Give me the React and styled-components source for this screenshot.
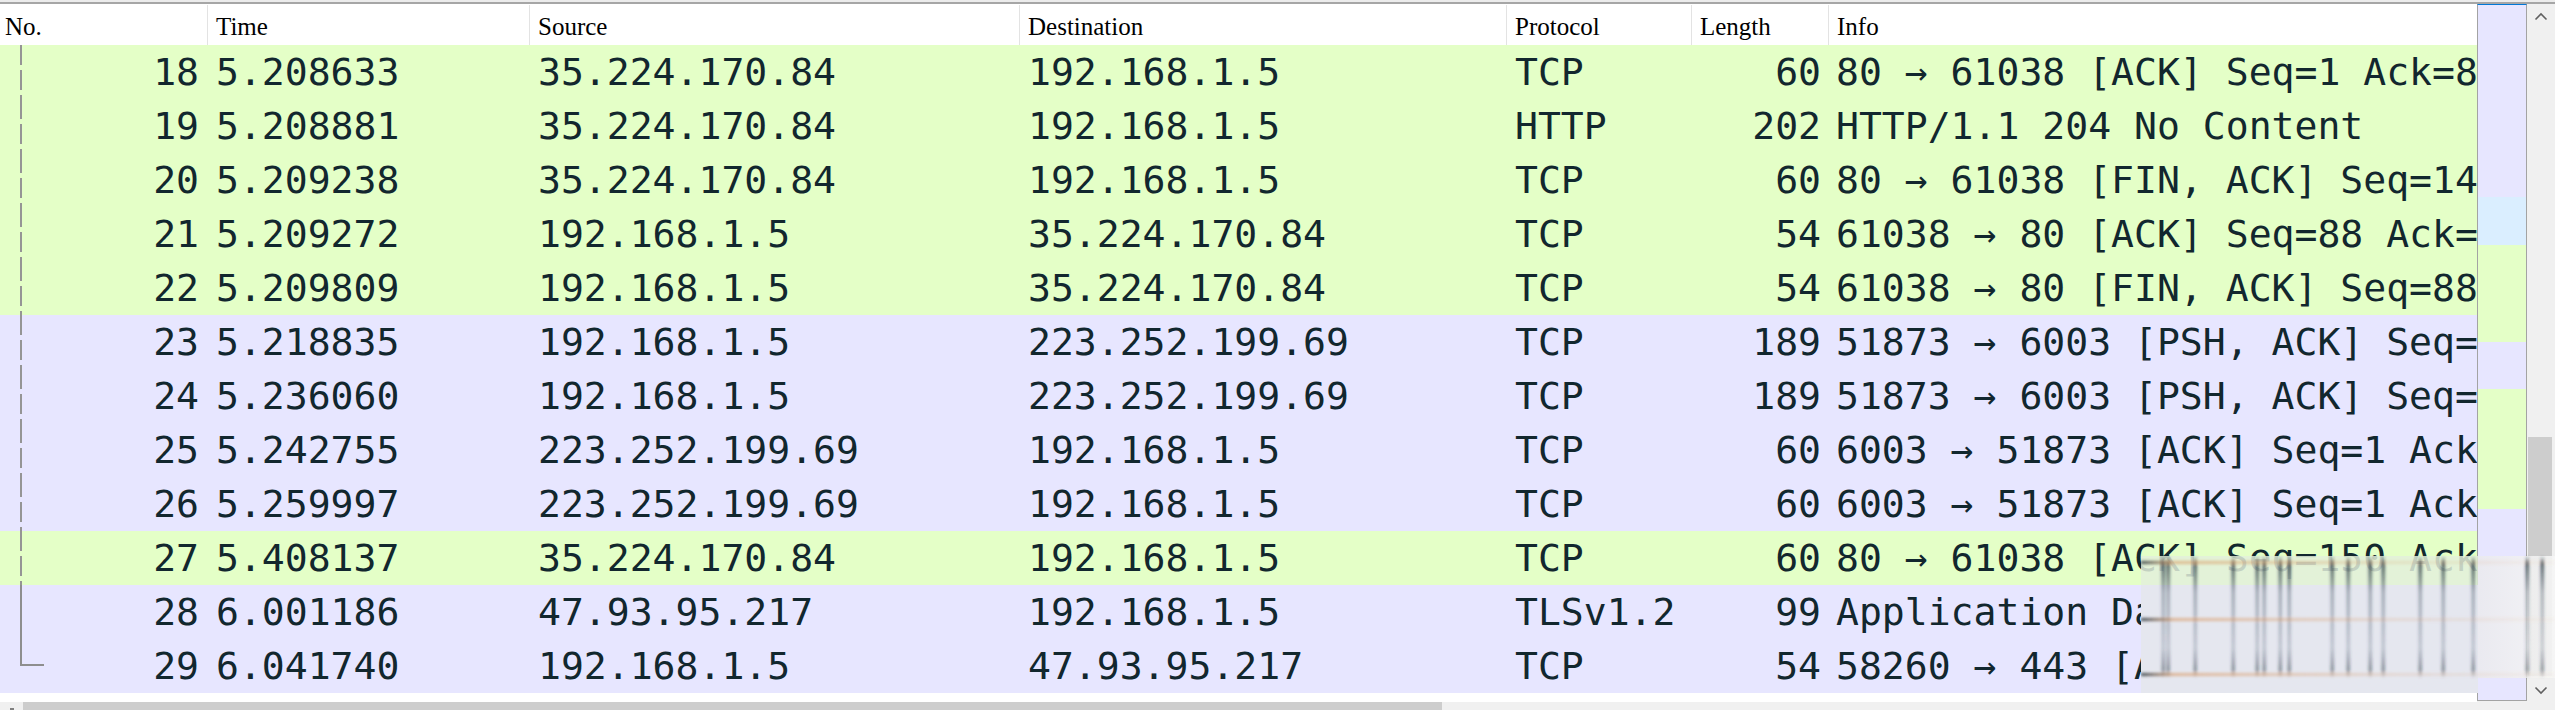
import React from 'react';
import styled, { createGlobalStyle } from 'styled-components';

const GlobalStyle = createGlobalStyle`
  html, body { margin: 0; padding: 0; background: #ffffff; }
  #root { width: 2555px; }
`;

const COLS = '207px 322px 490px 487px 185px 137px 1fr';

const GREEN = '#e4ffc7';
const LAVENDER = '#e7e6ff';
const BLUE = '#daeeff';

const packets = [
  { no: 18, time: '5.208633', src: '35.224.170.84', dst: '192.168.1.5', proto: 'TCP', len: 60, info: '80 → 61038 [ACK] Seq=1 Ack=88 Win=66816 Len=0', bg: GREEN, tree: 'dash' },
  { no: 19, time: '5.208881', src: '35.224.170.84', dst: '192.168.1.5', proto: 'HTTP', len: 202, info: 'HTTP/1.1 204 No Content', bg: GREEN, tree: 'dash' },
  { no: 20, time: '5.209238', src: '35.224.170.84', dst: '192.168.1.5', proto: 'TCP', len: 60, info: '80 → 61038 [FIN, ACK] Seq=149 Ack=88 Win=66816 Len=0', bg: GREEN, tree: 'dash' },
  { no: 21, time: '5.209272', src: '192.168.1.5', dst: '35.224.170.84', proto: 'TCP', len: 54, info: '61038 → 80 [ACK] Seq=88 Ack=150 Win=131328 Len=0', bg: GREEN, tree: 'dash' },
  { no: 22, time: '5.209809', src: '192.168.1.5', dst: '35.224.170.84', proto: 'TCP', len: 54, info: '61038 → 80 [FIN, ACK] Seq=88 Ack=150 Win=131328 Len=0', bg: GREEN, tree: 'dash' },
  { no: 23, time: '5.218835', src: '192.168.1.5', dst: '223.252.199.69', proto: 'TCP', len: 189, info: '51873 → 6003 [PSH, ACK] Seq=1 Ack=1 Win=512 Len=135', bg: LAVENDER, tree: 'dash' },
  { no: 24, time: '5.236060', src: '192.168.1.5', dst: '223.252.199.69', proto: 'TCP', len: 189, info: '51873 → 6003 [PSH, ACK] Seq=136 Ack=1 Win=512 Len=135', bg: LAVENDER, tree: 'dash' },
  { no: 25, time: '5.242755', src: '223.252.199.69', dst: '192.168.1.5', proto: 'TCP', len: 60, info: '6003 → 51873 [ACK] Seq=1 Ack=136 Win=501 Len=0', bg: LAVENDER, tree: 'dash' },
  { no: 26, time: '5.259997', src: '223.252.199.69', dst: '192.168.1.5', proto: 'TCP', len: 60, info: '6003 → 51873 [ACK] Seq=1 Ack=271 Win=501 Len=0', bg: LAVENDER, tree: 'dash' },
  { no: 27, time: '5.408137', src: '35.224.170.84', dst: '192.168.1.5', proto: 'TCP', len: 60, info: '80 → 61038 [ACK] Seq=150 Ack=89 Win=66816 Len=0', bg: GREEN, tree: 'dash' },
  { no: 28, time: '6.001186', src: '47.93.95.217', dst: '192.168.1.5', proto: 'TLSv1.2', len: 99, info: 'Application Data', bg: LAVENDER, tree: 'line' },
  { no: 29, time: '6.041740', src: '192.168.1.5', dst: '47.93.95.217', proto: 'TCP', len: 54, info: '58260 → 443 [ACK] Seq=1 Ack=46 Win=513 Len=0', bg: LAVENDER, tree: 'end' },
];

// minimap slices, heights in px
const minimap = [
  { h: 192, bg: LAVENDER },
  { h: 48, bg: BLUE },
  { h: 97, bg: GREEN },
  { h: 47, bg: LAVENDER },
  { h: 120, bg: GREEN },
  { h: 191, bg: LAVENDER },
];

const Page = styled.div`
  position: relative;
  width: 2555px;
  height: 710px;
  overflow: hidden;
  display: flex;
  flex-direction: column;
  background: #ffffff;
`;

const TopRule = styled.div`
  height: 2px;
  background: #ececec;
  border-bottom: 2px solid #a6a6a6;
  flex: none;
`;

const Body = styled.div`
  flex: 1;
  display: flex;
  min-height: 0;
`;

const Main = styled.div`
  width: 2477px;
  flex: none;
  display: flex;
  flex-direction: column;
  overflow: hidden;
`;

const HeaderRow = styled.div`
  display: grid;
  grid-template-columns: ${COLS};
  height: 41px;
  flex: none;
  background: #ffffff;
`;

const HeaderCell = styled.div`
  display: flex;
  align-items: center;
  padding: 3px 0 0 ${p => (p.$first ? '5px' : '8px')};
  margin-top: 1px;
  border-left: ${p => (p.$first ? 'none' : '1px solid #e3e3e3')};
  font-family: "Liberation Serif", serif;
  font-size: 25px;
  color: #000000;
  white-space: nowrap;
  overflow: hidden;
`;

const Row = styled.div`
  display: grid;
  grid-template-columns: ${COLS};
  height: 54px;
  background: ${p => p.$bg};
  font-family: "DejaVu Sans Mono", monospace;
  font-size: 38.1px;
  color: #12272e;
  line-height: 54px;
`;

const Cell = styled.div`
  padding: 0 ${p => (p.$right ? '7px' : '9px')} 0 9px;
  text-align: ${p => (p.$right ? 'right' : 'left')};
  white-space: nowrap;
  overflow: hidden;
`;

const InfoCell = styled(Cell)`
  padding-left: 8px;
  overflow: hidden;
`;

const NoCell = styled.div`
  display: flex;
  align-items: stretch;
  padding-right: 8px;
`;

const NoText = styled.span`
  margin-left: auto;
`;

const TreeMark = styled.span`
  flex: none;
  margin-left: 20px;
  width: ${p => (p.$kind === 'end' ? '24px' : '2px')};
  height: ${p => (p.$kind === 'end' ? '27px' : 'auto')};
  align-self: ${p => (p.$kind === 'end' ? 'flex-start' : 'stretch')};
  background: ${p =>
    p.$kind === 'dash'
      ? 'repeating-linear-gradient(to bottom, #959595 0 20px, transparent 20px 25px)'
      : p.$kind === 'line'
      ? '#8e8e8e'
      : 'transparent'};
  border-left: ${p => (p.$kind === 'end' ? '2px solid #8e8e8e' : 'none')};
  border-bottom: ${p => (p.$kind === 'end' ? '2px solid #8e8e8e' : 'none')};
  box-sizing: border-box;
`;

const HScroll = styled.div`
  margin-top: 9px;
  height: 17px;
  flex: none;
  display: flex;
  background: #f0f0f0;
`;

const HButton = styled.div`
  width: 23px;
  flex: none;
  display: flex;
  justify-content: center;
  padding-top: 4px;
`;

const HThumb = styled.div`
  width: 1419px;
  background: #cdcdcd;
`;

const Side = styled.div`
  flex: 1;
  display: flex;
  background: #f0f0f0;
`;

const Minimap = styled.div`
  width: 50px;
  height: 697px;
  box-sizing: border-box;
  flex: none;
  display: flex;
  flex-direction: column;
  border: 1px solid #a3a3a3;
  border-top: 1px solid #0078d7;
  background: #ffffff;
`;

const Slice = styled.div`
  height: ${p => p.$h}px;
  flex: none;
  background: ${p => p.$bg};
`;

const VScroll = styled.div`
  flex: 1;
  display: flex;
  flex-direction: column;
  height: 698px;
`;

const VButton = styled.div`
  height: ${p => p.$h}px;
  flex: none;
  display: flex;
  justify-content: center;
  align-items: center;
`;

const VTrack = styled.div`
  flex: 1;
  display: flex;
  flex-direction: column;
  padding: 0 3px 0 1px;
`;

const VThumb = styled.div`
  background: #cdcdcd;
  flex: none;
`;

const Smudge = styled.svg`
  position: absolute;
  left: 2141px;
  top: 554px;
  pointer-events: none;
`;

const Chevron = ({ up }) => (
  <svg width="14" height="9" viewBox="0 0 14 9">
    <path
      d={up ? 'M1.5 7.5 L7 2 L12.5 7.5' : 'M1.5 1.5 L7 7 L12.5 1.5'}
      fill="none"
      stroke="#606060"
      strokeWidth="1.6"
    />
  </svg>
);

const streaks = [22, 27, 54, 92, 116, 123, 139, 148, 191, 207, 229, 242, 279, 302, 332, 386, 401];
const bars = [7, 64, 119];

function SmudgeArt() {
  return (
    <Smudge width="414" height="140" viewBox="0 0 414 140">
      <defs>
        <linearGradient id="vfade" x1="0" y1="0" x2="0" y2="1">
          <stop offset="0" stopColor="#1a2a35" stopOpacity="0" />
          <stop offset="0.06" stopColor="#1a2a35" stopOpacity="0.75" />
          <stop offset="0.3" stopColor="#2b3a4c" stopOpacity="0.35" />
          <stop offset="0.75" stopColor="#3a4660" stopOpacity="0.22" />
          <stop offset="0.93" stopColor="#1a2a35" stopOpacity="0.45" />
          <stop offset="1" stopColor="#1a2a35" stopOpacity="0" />
        </linearGradient>
        <linearGradient id="hfade" x1="0" y1="0" x2="1" y2="0">
          <stop offset="0" stopColor="#1a2a35" stopOpacity="0.85" />
          <stop offset="0.08" stopColor="#d9955c" stopOpacity="0.6" />
          <stop offset="0.6" stopColor="#d9955c" stopOpacity="0.2" />
          <stop offset="1" stopColor="#d9955c" stopOpacity="0.05" />
        </linearGradient>
        <linearGradient id="side" x1="0" y1="0" x2="1" y2="0">
          <stop offset="0" stopColor="#ebebeb" stopOpacity="0.75" />
          <stop offset="1" stopColor="#f6f6f6" stopOpacity="0.9" />
        </linearGradient>
        <filter id="soft" x="-20%" y="-20%" width="140%" height="140%">
          <feGaussianBlur stdDeviation="1.8" />
        </filter>
      </defs>
      <rect x="0" y="2" width="337" height="29" fill="#e3f0da" fillOpacity="0.85" />
      <rect x="0" y="31" width="337" height="108" fill="#e5e7ef" fillOpacity="1" />
      <rect x="337" y="2" width="77" height="122" fill="url(#side)" />
      <g filter="url(#soft)">
        {streaks.map(x => (
          <rect key={x} x={x - 1.5} y="2" width="3.5" height="122" fill="url(#vfade)" />
        ))}
        {bars.map(y => (
          <rect key={y} x="0" y={y} width="414" height="3" fill="url(#hfade)" />
        ))}
      </g>
    </Smudge>
  );
}

const headers = ['No.', 'Time', 'Source', 'Destination', 'Protocol', 'Length', 'Info'];

export default function App() {
  return (
    <>
      <GlobalStyle />
      <Page>
        <TopRule />
        <Body>
          <Main>
            <HeaderRow>
              {headers.map((h, i) => (
                <HeaderCell key={h} $first={i === 0}>{h}</HeaderCell>
              ))}
            </HeaderRow>
            {packets.map(p => (
              <Row key={p.no} $bg={p.bg}>
                <NoCell>
                  <TreeMark $kind={p.tree} />
                  <NoText>{p.no}</NoText>
                </NoCell>
                <Cell>{p.time}</Cell>
                <Cell>{p.src}</Cell>
                <Cell>{p.dst}</Cell>
                <Cell>{p.proto}</Cell>
                <Cell $right>{p.len}</Cell>
                <InfoCell>{p.info}</InfoCell>
              </Row>
            ))}
            <HScroll>
              <HButton>
                <svg width="6" height="6" viewBox="0 0 6 6">
                  <path d="M1 3 H5" stroke="#505050" strokeWidth="1.4" />
                </svg>
              </HButton>
              <HThumb />
            </HScroll>
          </Main>
          <Side>
            <Minimap>
              {minimap.map((s, i) => (
                <Slice key={i} $h={s.h} $bg={s.bg} />
              ))}
            </Minimap>
            <VScroll>
              <VButton $h={24}>
                <Chevron up />
              </VButton>
              <VTrack>
                <div style={{ height: 409 }} />
                <VThumb style={{ height: 239 }} />
              </VTrack>
              <VButton $h={24}>
                <Chevron />
              </VButton>
            </VScroll>
          </Side>
        </Body>
        <SmudgeArt />
      </Page>
    </>
  );
}
